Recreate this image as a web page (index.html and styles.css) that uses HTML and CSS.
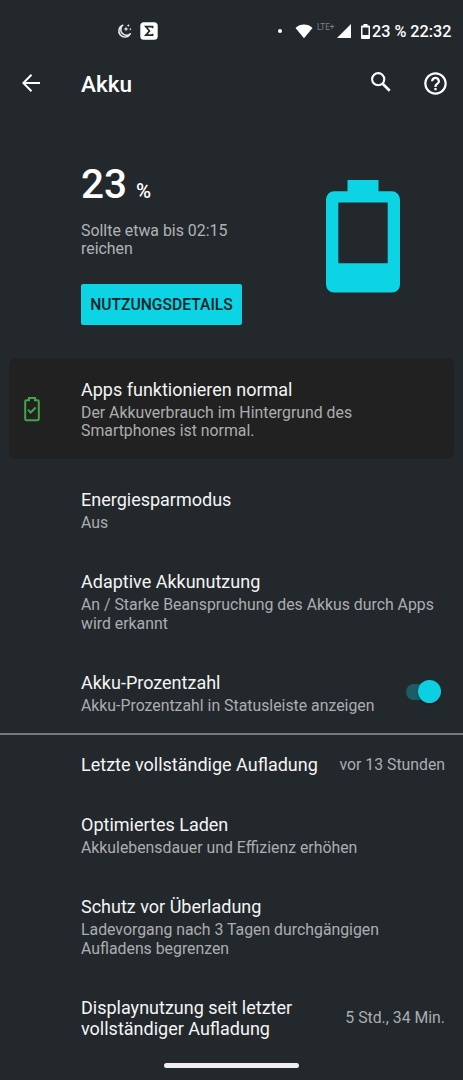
FILE: index.html
```html
<!DOCTYPE html>
<html lang="de">
<head>
<meta charset="utf-8">
<title>Akku</title>
<link rel="stylesheet" href="styles.css">
</head>
<body>
<div class="screen">
  <div class="status">
    <svg class="moon" width="16" height="16" viewBox="0 0 16 16"><path d="M5.700 2.200A6.100 6.100 0 1 0 13.300 10.800 5.400 5.400 0 0 1 5.700 2.200Z" fill="none" stroke="#e8e8e8" stroke-width="1.600" stroke-linejoin="round"/><path d="M9 3.500l.7 1.800 1.800.7-1.800.7L9 8.500l-.7-1.800L6.500 6l1.800-.7ZM11.300 1l.5 1 1 .5-1 .5-.5 1-.5-1-1-.5 1-.5ZM13.300 4.800l.4.9.9.4-.9.4-.4.9-.4-.9-.9-.4.9-.4Z" fill="#e8e8e8"/></svg>
    <svg class="sigma" width="18" height="18" viewBox="0 0 18 18"><rect x=".3" y=".3" width="17.400" height="17.400" rx="3.500" fill="#fff"/><path d="M12.600 6.300V4.700H5.800L9.500 9 5.800 13.200H12.600V11.700" fill="none" stroke="#23282c" stroke-width="1.700"/></svg>
    <span class="dot"></span>
    <svg class="wifi" width="18" height="15" viewBox="0 0 18 15"><path d="M.5 3.900C5-.6 13-.6 17.500 3.900L9 14.300Z" fill="#fff"/></svg>
    <span class="lte">LTE+</span>
    <svg class="signal" width="14" height="14" viewBox="0 0 14 14"><path d="M14 0V14H0Z" fill="#fff"/></svg>
    <svg class="mini-battery" width="9" height="15" viewBox="0 0 9 15"><path fill="#fff" fill-rule="evenodd" d="M2.500 0h4v1.500H8q1 0 1 1V14q0 1-1 1H1q-1 0-1-1V2.500q0-1 1-1h1.500ZM1.500 3.500V11h6V3.500Z"/></svg>
    <span class="clock">23 % 22:32</span>
  </div>
  <div class="appbar">
    <svg class="back" width="18" height="18" viewBox="0 0 18 18"><path d="M18 9H1.500M9.500 .8L1.300 9l8.200 8.200" fill="none" stroke="#fff" stroke-width="2"/></svg>
    <h1 class="heading">Akku</h1>
    <svg class="search" width="20" height="20" viewBox="0 0 20 20"><circle cx="7.200" cy="7.200" r="6.100" fill="none" stroke="#fff" stroke-width="2.100"/><path d="M11.700 11.700l7 7" stroke="#fff" stroke-width="2.700"/></svg>
    <svg class="help" width="24" height="24" viewBox="0 0 24 24"><path fill="#fff" d="M11 18h2v-2h-2v2zm1-16C6.480 2 2 6.480 2 12s4.480 10 10 10 10-4.480 10-10S17.520 2 12 2zm0 18c-4.410 0-8-3.590-8-8s3.590-8 8-8 8 3.590 8 8-3.590 8-8 8zm0-14c-2.210 0-4 1.790-4 4h2c0-1.100.9-2 2-2s2 .9 2 2c0 2-3 1.750-3 5h2c0-2.250 3-2.500 3-5 0-2.210-1.790-4-4-4z"/></svg>
  </div>
  <div class="hero">
    <div class="hero-info">
      <div class="percent">23 <small>%</small></div>
      <div class="estimate">Sollte etwa bis 02:15<br>reichen</div>
      <button class="details">NUTZUNGSDETAILS</button>
    </div>
    <svg class="big-battery" width="74" height="113" viewBox="0 0 74 113"><path fill="#0cd4e5" fill-rule="evenodd" d="M21.500 0H52.500V11.300H66A8 8 0 0 1 74 19.300V104.500A8 8 0 0 1 66 112.500H8A8 8 0 0 1 0 104.500V19.300A8 8 0 0 1 8 11.300H21.500ZM12.300 22.500V83.200H61.700V22.500Z"/></svg>
  </div>
  <div class="card">
    <svg class="ok-battery" width="16" height="25" viewBox="0 0 16 25"><path d="M5 1h6v2.300h2.500q1.300 0 1.300 1.300V22q0 1.300-1.300 1.300H2.500Q1.200 23.300 1.200 22V4.600q0-1.300 1.300-1.300H5Z" fill="none" stroke="#41a447" stroke-width="2"/><path d="M4 12.800l2.700 2.700 5-5" fill="none" stroke="#41a447" stroke-width="2"/></svg>
    <div class="title">Apps funktionieren normal</div>
    <div class="summary">Der Akkuverbrauch im Hintergrund des<br>Smartphones ist normal.</div>
  </div>
  <div class="row">
    <div class="title">Energiesparmodus</div>
    <div class="summary">Aus</div>
  </div>
  <div class="row">
    <div class="title">Adaptive Akkunutzung</div>
    <div class="summary">An / Starke Beanspruchung des Akkus durch Apps<br>wird erkannt</div>
  </div>
  <div class="row split toggle-row">
    <div>
      <div class="title">Akku-Prozentzahl</div>
      <div class="summary">Akku-Prozentzahl in Statusleiste anzeigen</div>
    </div>
    <div class="switch"><span class="thumb"></span></div>
  </div>
  <div class="row split charge-row">
    <div class="title">Letzte vollständige Aufladung</div>
    <div class="value">vor 13 Stunden</div>
  </div>
  <div class="row">
    <div class="title">Optimiertes Laden</div>
    <div class="summary">Akkulebensdauer und Effizienz erhöhen</div>
  </div>
  <div class="row">
    <div class="title">Schutz vor Überladung</div>
    <div class="summary">Ladevorgang nach 3 Tagen durchgängigen<br>Aufladens begrenzen</div>
  </div>
  <div class="row split display-row">
    <div class="title">Displaynutzung seit letzter<br>vollständiger Aufladung</div>
    <div class="value">5 Std., 34 Min.</div>
  </div>
  <div class="home-bar"></div>
</div>
</body>
</html>
```
FILE: styles.css
```css
* { box-sizing: border-box; }
body { margin: 0; background: #23282c; }
.screen {
  width: 463px;
  height: 1080px;
  overflow: hidden;
  display: flex;
  flex-direction: column;
  background: #23282c;
  color: #f4f5f5;
  font-family: Roboto, "Liberation Sans", sans-serif;
  white-space: nowrap;
}
.screen > * { flex-shrink: 0; }
svg { display: block; flex-shrink: 0; }
.status {
  height: 52px;
  padding: 10px 0 0 117px;
  display: flex;
  align-items: center;
}
.sigma { margin-left: 7px; }
.dot { width: 4px; height: 4px; margin-left: 120px; border-radius: 50%; background: #fff; }
.wifi { margin-left: 13px; }
.lte { width: 18px; margin-left: 4px; font-size: 8.200px; line-height: 10px; margin-bottom: 9px; color: #7d8184; }
.signal { margin-left: 2px; }
.mini-battery { margin-left: 10px; }
.clock { margin: 1px 0 0 2px; font-size: 16.200px; font-weight: 500; color: #fff; }
.appbar {
  height: 62px;
  margin-bottom: 2px;
  padding: 0 14px 0 22px;
  display: flex;
  align-items: center;
}
.heading { flex: 1; margin: 2px 0 0 41px; font-size: 22.500px; font-weight: 500; color: #fff; }
.search { margin-bottom: 3px; }
.help { width: 27px; height: 27px; margin-left: 31px; }
.hero { height: 242px; padding: 44px 63px 0 81px; display: flex; justify-content: space-between; }
.percent { height: 48px; font-size: 40.500px; line-height: 48px; font-weight: 500; color: #fff; }
.percent small { margin-left: -1px; font-size: 20.500px; }
.estimate { margin-top: 13.500px; font-size: 15.900px; line-height: 18.500px; color: #b0b3b5; }
.details {
  display: block;
  width: 161px;
  height: 41px;
  margin: 25.500px 0 0;
  padding: 0;
  border: 0;
  border-radius: 2px;
  background: #0cd4e5;
  color: #0a2226;
  font: 500 15.650px Roboto, sans-serif;
}
.big-battery { margin-top: 20px; }
.card {
  height: 101px;
  margin: 0 9px 9px;
  padding: 19.500px 0 0 72px;
  position: relative;
  border-radius: 7px;
  background: #212121;
}
.ok-battery { position: absolute; left: 14.500px; top: 38.500px; }
.row { padding: 20px 18px 17.500px 81px; }
.title { font-size: 18px; line-height: 24px; }
.summary { margin-top: 2px; font-size: 15.830px; line-height: 18.500px; color: #abaeb0; }
.value { font-size: 15.800px; color: #abaeb0; }
.split { display: flex; justify-content: space-between; align-items: center; }
.toggle-row { padding-right: 22px; border-bottom: 2px solid #777a7c; }
.switch {
  width: 35px;
  height: 16px;
  margin-bottom: 2px;
  border-radius: 8px;
  background: #1c5d65;
  display: flex;
  justify-content: flex-end;
  align-items: center;
}
.thumb {
  width: 23px;
  height: 23px;
  flex-shrink: 0;
  border-radius: 50%;
  background: #0cd0e1;
  box-shadow: 0 1px 2px rgba(0, 0, 0, .4);
}
.charge-row { padding-top: 18px; padding-bottom: 16.500px; }
.display-row .title { line-height: 21px; padding-top: 1px; }
.home-bar {
  width: 135px;
  height: 5px;
  margin: 7px 0 0 164px;
  border-radius: 3px;
  background: #f2eef0;
}
```
